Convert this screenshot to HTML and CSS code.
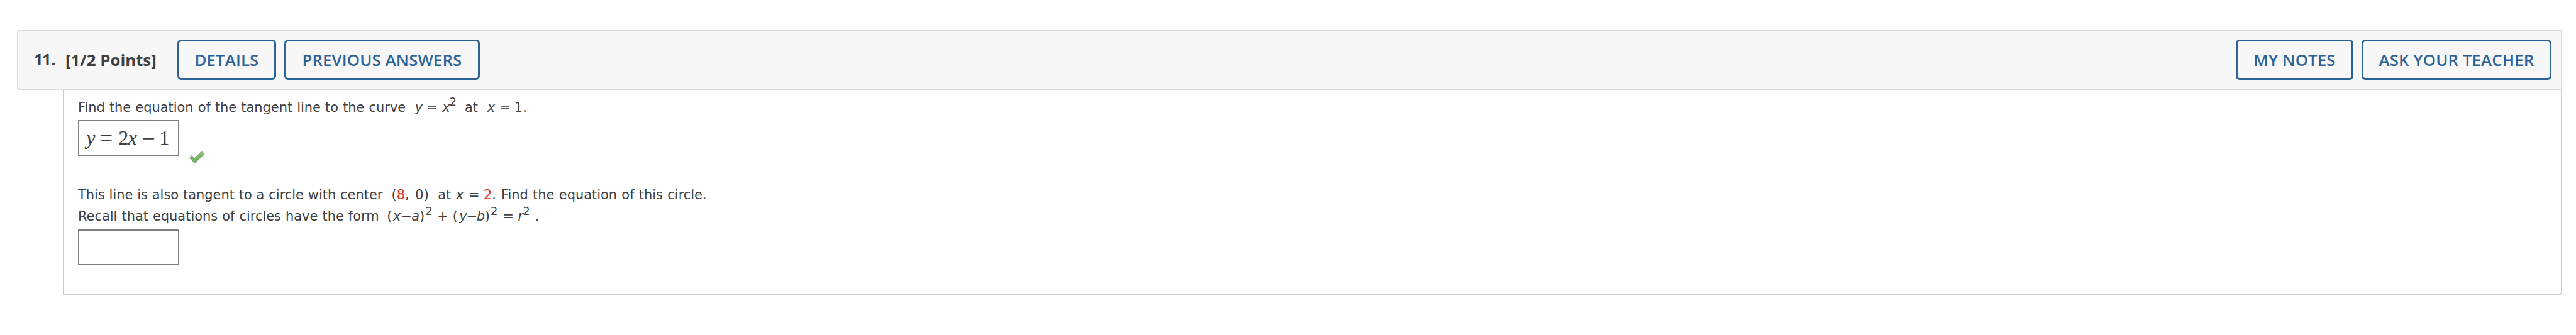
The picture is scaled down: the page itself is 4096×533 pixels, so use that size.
FILE: index.html
```
<!DOCTYPE html>
<html lang="en">
<head>
  <meta charset="UTF-8">
  <title>Question 11</title>
  <link rel="stylesheet" href="styles.css">
</head>
<body>
  <div class="question">
    <div class="header">
      <span class="number"><span class="kern">1</span>1.</span>
      <span class="points">[1/2 Points]</span>
      <button class="btn details">DETAILS</button>
      <button class="btn previous">PREVIOUS ANSWERS</button>
      <button class="btn notes">MY NOTES</button>
      <button class="btn teacher">ASK YOUR TEACHER</button>
    </div>
    <div class="content">
      <div class="line curve">
        <span>Find the equation of the tangent line to the curve</span>
        <i>y</i><span>=</span><span><i>x</i><sup>2</sup></span>
        <span>at</span>
        <i>x</i><span>=</span><span>1.</span>
      </div>
      <div class="answer-row">
        <div class="answer">
          <i>y</i><span class="op">=</span><span>2</span><i>x</i><span class="op">−</span><span>1</span>
        </div>
        <svg class="check" viewBox="0 0 32 26">
          <defs>
            <linearGradient id="green" x1="0" y1="0" x2="0.3" y2="1">
              <stop offset="0" stop-color="#92c883"/>
              <stop offset="1" stop-color="#70ad63"/>
            </linearGradient>
          </defs>
          <path d="M1.5 13.5 L6 9 L11.5 14 L25.5 1 L30.5 6 L12 24.5 Z" fill="url(#green)" stroke="#82b577" stroke-width="1" stroke-linejoin="round"/>
          <path d="M3.5 15.5 L12 24 L29.5 7" fill="none" stroke="#5f9956" stroke-width="1.2"/>
        </svg>
      </div>
      <div class="line center">
        <span>This line is also tangent to a circle with center</span>
        <span>(<b>8</b>,</span><span>0)</span>
        <span>at</span>
        <i>x</i><span>=</span><span><b>2</b>.</span>
        <span class="find">Find the equation of this circle.</span>
      </div>
      <div class="line form">
        <span>Recall that equations of circles have the form</span>
        <span>(</span><i>x</i><span>−</span><i>a</i><span class="pow">)<sup>2</sup></span>
        <span>+</span>
        <span>(</span><i>y</i><span>−</span><i>b</i><span class="pow">)<sup>2</sup></span>
        <span>=</span><span><i>r</i><sup>2</sup></span><span>.</span>
      </div>
      <div class="answer"></div>
    </div>
  </div>
</body>
</html>
```
FILE: styles.css
```
* {
  box-sizing: border-box;
}
body {
  margin: 0;
  background: #fff;
  color: #404040;
  font-family: Verdana, "DejaVu Sans", sans-serif;
}
.question {
  padding: 47px 22.4px 0 27.4px;
}
.header {
  display: flex;
  align-items: center;
  height: 96px;
  padding: 0 14.4px 0 24.4px;
  border: 2px solid #ddd;
  border-radius: 4px;
  background: #f7f7f7;
  font-family: "Open Sans", sans-serif;
  font-size: 25.75px;
  font-weight: 700;
}
.number {
  width: 50.2px;
  padding-bottom: 3px;
}
.kern {
  letter-spacing: -1.8px;
}
.points {
  width: 177.6px;
}
.btn {
  height: 64px;
  padding: 0;
  border: 3px solid #2c6397;
  border-radius: 6px;
  background: transparent;
  color: #2c6397;
  font: 600 25.75px "Open Sans", sans-serif;
  letter-spacing: 0.15px;
  cursor: pointer;
}
.details {
  width: 157.8px;
}
.previous {
  width: 310.6px;
  margin-left: 12.8px;
}
.notes {
  width: 186.8px;
  margin-left: auto;
}
.teacher {
  width: 302.6px;
  margin-left: 12.8px;
}
.content {
  height: 327px;
  margin-left: 72.4px;
  padding: 14.6px 0 0 22.2px;
  border: 2px solid #ccc;
  border-top: none;
  border-radius: 0 0 6px 0;
}
.line {
  display: grid;
  align-items: baseline;
  justify-content: start;
  height: 26px;
  font-size: 20.92px;
  line-height: 26px;
  white-space: nowrap;
  word-spacing: 0.45px;
}
.curve {
  grid-template-columns: 535.9px 18.3px 25.1px 35.8px 35.6px 19.8px 23.4px auto;
}
.center {
  grid-template-columns: 498.5px 37.9px 35.8px 28.9px 19.9px 24px 28px auto;
  margin-top: 36.8px;
  word-spacing: 0.25px;
}
.form {
  grid-template-columns: 491.3px 9.8px 12.6px 16.6px 12.7px 28.4px 24.5px 10.4px 11.5px 16.3px 12.7px 28.9px 24px 26.9px auto;
  margin-top: 8.6px;
}
.find {
  word-spacing: 0.7px;
}
.line b {
  color: #ea3323;
  font-weight: 400;
}
sup {
  margin-left: -0.8px;
  font-size: 17.4px;
  line-height: 0;
  vertical-align: 9.3px;
}
.pow sup {
  margin-left: 1.4px;
}
.answer-row {
  display: flex;
  align-items: flex-start;
  height: 68.5px;
  margin-top: 7.9px;
}
.answer {
  display: grid;
  grid-template-columns: 21.2px 29.8px 15.3px 22.2px 27.7px auto;
  align-items: baseline;
  justify-content: start;
  width: 161px;
  height: 56.3px;
  padding-left: 11.2px;
  border: 2px solid #808080;
  font: 32.2px/50px "Liberation Serif", serif;
}
.answer .op {
  font-size: 37px;
  transform: translateY(2.5px);
}
.form + .answer {
  margin-top: 7.9px;
}
.check {
  width: 25.7px;
  height: 21px;
  margin: 48.4px 0 0 14.8px;
}
```
